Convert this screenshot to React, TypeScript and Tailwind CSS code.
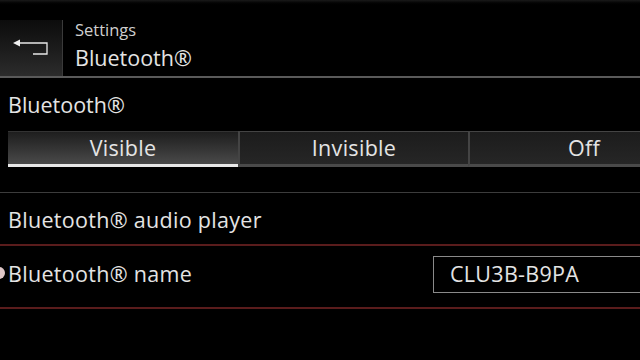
export default function App() {
  const font = { fontFamily: '"Open Sans", "Noto Sans", sans-serif' }
  return (
    <div className="w-[640px] h-[360px] overflow-hidden bg-black text-[#e4e4e4]" style={font}>
      <div className="h-[6px] bg-gradient-to-b from-[#1a1a1a] to-black" />
      {/* header */}
      <div className="flex h-[72px] border-b-2 border-[#5a5a5a]">
        <div className="mt-[14px] flex w-[63px] items-center justify-center border-r border-[#3a3a3a] bg-gradient-to-b from-[#0c0c0c] to-[#2c2c2c]">
          <svg width="40" height="20" viewBox="0 0 40 20" className="mt-[2px]">
            <path d="M8 4 H36 V15 H22" fill="none" stroke="#e8e8e8" strokeWidth="1.3" />
            <path d="M2 4 L9 0.5 V7.5 Z" fill="#f0f0f0" />
          </svg>
        </div>
        <div className="flex flex-col pl-[12px] pt-[13px]">
          <span className="text-[16.5px] leading-[22px] text-[#cfcfcf]">Settings</span>
          <span className="mt-[3px] text-[21.5px] leading-[28px]">Bluetooth®</span>
        </div>
      </div>

      {/* Bluetooth visibility */}
      <div className="pl-[8px] pt-[12px] text-[21.5px] leading-[30px]">Bluetooth®</div>
      <div className="mt-[11px] ml-[8px] flex h-[36px] text-[21.5px] tracking-[0.3px]">
        <div className="flex w-[230px] shrink-0 items-center justify-center border-t border-[#333] border-b-[3px] border-b-[#e8e8e8] bg-gradient-to-b from-[#1e1e1e] to-[#4a4a4a]">
          Visible
        </div>
        <div className="flex w-[230px] shrink-0 items-center justify-center border-l-2 border-t border-[#444] border-b-[3px] border-b-[#4a4a4a] bg-gradient-to-b from-[#1c1c1c] to-[#262626]">
          Invisible
        </div>
        <div className="flex w-[230px] shrink-0 items-center justify-center border-l-2 border-t border-[#444] border-b-[3px] border-b-[#4a4a4a] bg-gradient-to-b from-[#1c1c1c] to-[#262626]">
          Off
        </div>
      </div>

      <div className="mt-[25px] h-px bg-[#3c3c3c]" />
      <div className="flex h-[51px] items-center pl-[8px] pt-[4px] text-[21.5px] tracking-[0.3px]">Bluetooth® audio player</div>
      <div className="h-[2px] bg-[#5a1c1c]" />

      {/* name row */}
      <div className="relative flex h-[61px] items-center justify-between pb-[5px] pl-[8px] text-[21.5px] tracking-[0.3px]">
        <div className="absolute left-[-7px] top-[21px] h-[12px] w-[12px] rounded-full bg-[#e0c8c8]" />
        <span>Bluetooth® name</span>
        <div className="flex h-[37px] w-[207px] items-center border border-r-0 border-[#8a8a8a] pl-[16px]">
          CLU3B-B9PA
        </div>
      </div>
      <div className="h-[2px] bg-[#5a1c1c]" />
    </div>
  )
}
